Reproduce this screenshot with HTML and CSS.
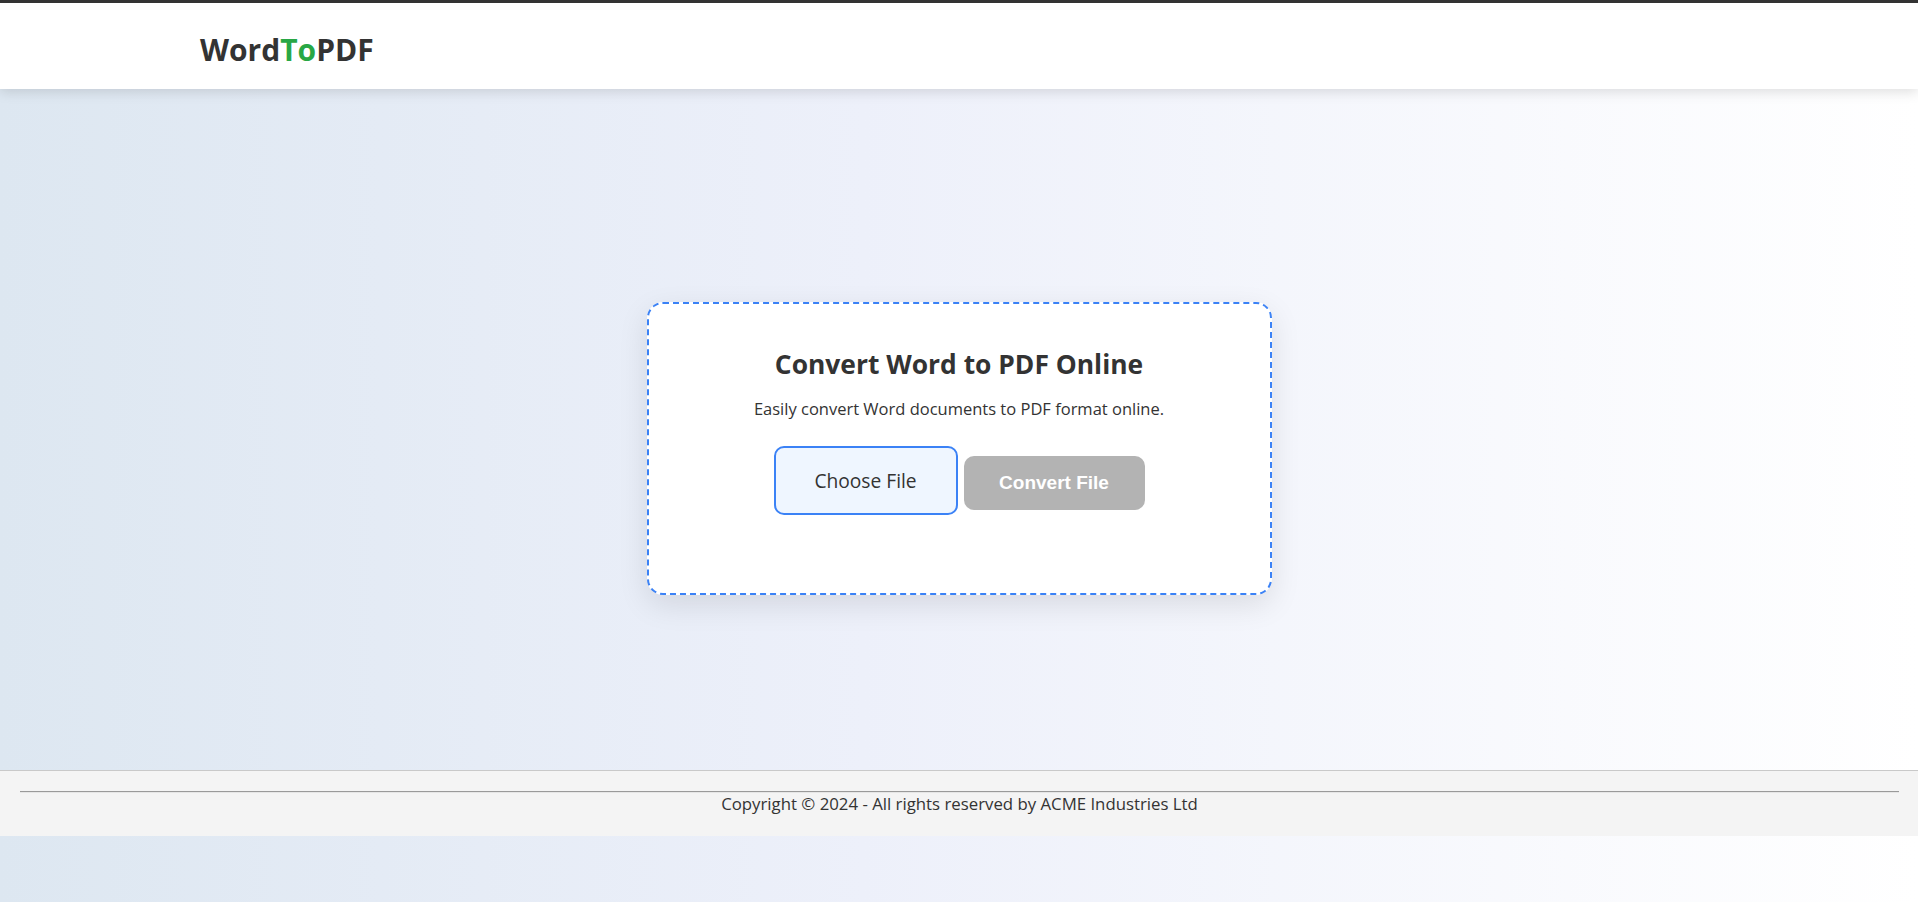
FILE: index.html
```html
<!DOCTYPE html>
<html lang="en">
<head>
<meta charset="utf-8">
<title>WordToPDF</title>
<link rel="stylesheet" href="styles.css">
</head>
<body>
<header class="site-header">
  <div class="logo">Word<span class="logo-accent">To</span>PDF</div>
</header>
<main class="main">
  <section class="card">
    <h2 class="card-title">Convert Word to PDF Online</h2>
    <p class="card-sub">Easily convert Word documents to PDF format online.</p>
    <div class="actions">
      <label class="btn-choose">Choose File</label>
      <button class="btn-convert" disabled>Convert File</button>
    </div>
  </section>
</main>
<footer class="site-footer">
  <hr class="footer-rule">
  <p class="footer-text">Copyright © 2024 - All rights reserved by ACME Industries Ltd</p>
</footer>
</body>
</html>
```

FILE: styles.css
```css
* { box-sizing: border-box; }
html {
  background: linear-gradient(to right, #dde7f1 0%, #edf0fa 45%, #ffffff 100%);
  min-height: 100%;
}
body {
  margin: 0;
  min-height: 100vh;
  font-family: "Open Sans", "Noto Sans", sans-serif;
  color: #333;
  background: linear-gradient(to right, #dde7f1 0%, #edf0fa 45%, #ffffff 100%);
}
.site-header {
  height: 89px;
  border-top: 3px solid #333;
  background: #fff;
  box-shadow: 0 3px 12px rgba(0, 0, 0, 0.13);
  display: flex;
  align-items: center;
  padding: 6px 200px 0;
  position: relative;
}
.logo {
  font-size: 30px;
  font-weight: 700;
  color: #333;
  letter-spacing: 0;
}
.logo-accent { color: #28a745; }
.main {
  height: 681px;
  padding-top: 38px;
  display: flex;
  align-items: center;
  justify-content: center;
}
.card {
  width: 625px;
  height: 293px;
  background: #fff;
  border: 2px dashed #3b82f6;
  border-radius: 16px;
  box-shadow: 0 10px 30px rgba(0, 0, 0, 0.1);
  padding: 42px 20px 0;
  text-align: center;
}
.card-title {
  margin: 0;
  font-size: 26.4px;
  line-height: 36px;
  font-weight: 700;
}
.card-sub {
  margin: 15px 0 0;
  font-size: 16.5px;
  line-height: 24px;
}
.actions {
  margin-top: 25px;
  display: flex;
  justify-content: center;
  align-items: flex-start;
  gap: 6px;
}
.btn-choose {
  width: 184px;
  height: 69px;
  border: 2px solid #3b82f6;
  border-radius: 10px;
  background: #eff6ff;
  display: flex;
  align-items: center;
  justify-content: center;
  font-size: 19.2px;
  color: #333;
}
.btn-convert {
  margin-top: 10px;
  width: 181px;
  height: 54px;
  border: none;
  border-radius: 10px;
  background: #b3b3b3;
  color: #fff;
  font-family: "Liberation Sans", Arial, sans-serif;
  font-weight: 700;
  font-size: 19px;
  padding: 0;
}
.site-footer {
  border-top: 1px solid #c9c9c9;
  background: #f4f4f4;
  padding: 12px 19px 21px 20px;
  text-align: center;
}
.footer-rule {
  margin: 8px 0 0;
  border: none;
  border-top: 1px solid #9a9a9a;
  border-bottom: 1px solid #e6e6e6;
  height: 0;
}
.footer-text {
  margin: 0;
  font-size: 16.8px;
  line-height: 22px;
  color: #333;
}
```
